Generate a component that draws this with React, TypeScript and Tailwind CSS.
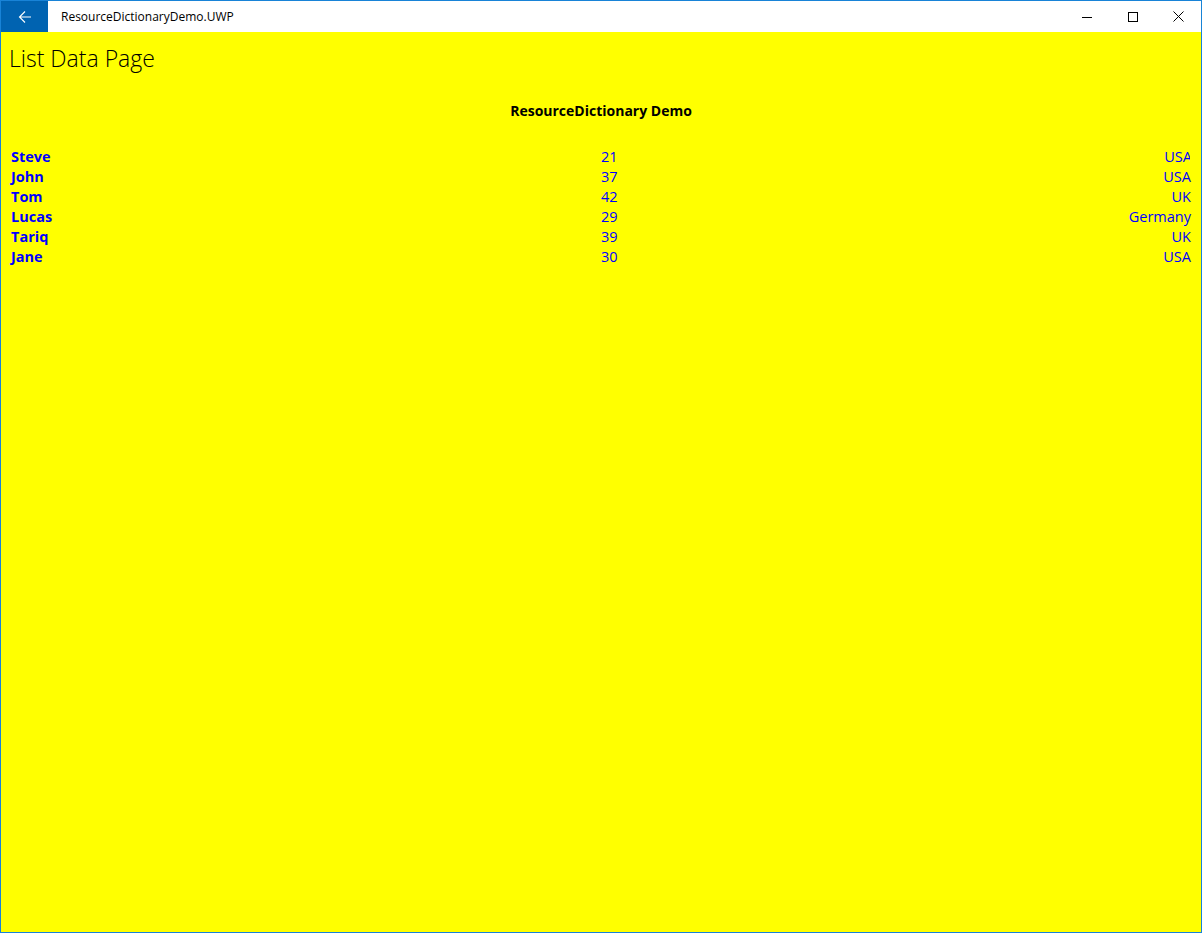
import React from "react";

const people = [
  { name: "Steve", age: 21, country: "USA" },
  { name: "John", age: 37, country: "USA" },
  { name: "Tom", age: 42, country: "UK" },
  { name: "Lucas", age: 29, country: "Germany" },
  { name: "Tariq", age: 39, country: "UK" },
  { name: "Jane", age: 30, country: "USA" },
];

export default function App() {
  return (
    <div
      className="w-[1202px] h-[933px] flex flex-col border border-[#1883d7] bg-[#ffff00] overflow-hidden"
      style={{ fontFamily: '"Open Sans", "Noto Sans", sans-serif' }}
    >
      {/* Title bar */}
      <div className="h-[31px] flex items-center bg-white shrink-0">
        <div className="w-[47px] h-full bg-[#0063b1] flex items-center justify-center">
          <svg width="14" height="14" viewBox="0 0 14 14" fill="none" stroke="white" strokeWidth="1.1">
            <path d="M13 7H1.5M7 1.5 1.5 7 7 12.5" />
          </svg>
        </div>
        <span className="ml-[13px] text-[12px] text-black">ResourceDictionaryDemo.UWP</span>
        <div className="ml-auto flex h-full">
          <div className="w-[46px] h-full flex items-center justify-center">
            <svg width="10" height="10" viewBox="0 0 10 10" stroke="black" strokeWidth="1">
              <path d="M0 5.5H10" />
            </svg>
          </div>
          <div className="w-[46px] h-full flex items-center justify-center">
            <svg width="10" height="10" viewBox="0 0 10 10" fill="none" stroke="black" strokeWidth="1">
              <rect x="0.5" y="0.5" width="9" height="9" />
            </svg>
          </div>
          <div className="w-[45px] h-full flex items-center justify-center">
            <svg width="11" height="11" viewBox="0 0 11 11" stroke="black" strokeWidth="1">
              <path d="M0.5 0.5 10.5 10.5M10.5 0.5 0.5 10.5" />
            </svg>
          </div>
        </div>
      </div>

      {/* Page */}
      <div className="flex flex-col">
        <h1 className="pl-[8px] pt-[10px] text-[23px] font-light leading-[32px] text-black">List Data Page</h1>
        <h2 className="mt-[27px] text-center text-[14px] font-bold text-black leading-[20px]">
          ResourceDictionary Demo
        </h2>
        <div className="mt-[26px] flex flex-col">
          {people.map((p, i) => (
            <div key={p.name} className="flex items-center h-[20px] text-[14.5px] text-[#0000ff]">
              <span className="w-[600px] pl-[10px] font-bold">{p.name}</span>
              <span className="w-[32px]">{p.age}</span>
              <div className={i === 0 ? "ml-auto w-[557px] mr-[11px] overflow-hidden flex justify-end" : "ml-auto mr-[10px]"}>
                <span className={i === 0 ? "mr-[-2px]" : ""}>{p.country}</span>
              </div>
            </div>
          ))}
        </div>
      </div>
    </div>
  );
}
